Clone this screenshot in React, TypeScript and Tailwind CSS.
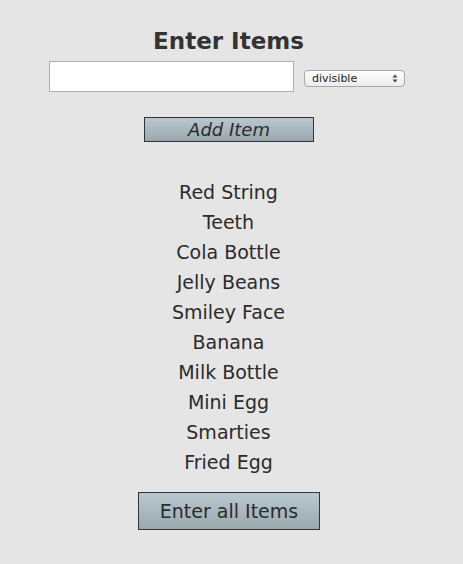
const items = [
  "Red String",
  "Teeth",
  "Cola Bottle",
  "Jelly Beans",
  "Smiley Face",
  "Banana",
  "Milk Bottle",
  "Mini Egg",
  "Smarties",
  "Fried Egg",
];

export default function App() {
  return (
    <div
      className="min-h-[564px] w-full bg-[#e5e5e5] text-[#2b2b2b]"
      style={{ fontFamily: '"DejaVu Sans", Verdana, sans-serif' }}
    >
      <div className="flex flex-col items-center pt-[26px]">
        <h1 className="mr-[6px] text-[23px] font-bold leading-[30px] text-[#333]">Enter Items</h1>
        <div className="mt-[5px] mr-[9px] flex items-center gap-[10px]">
          <input
            type="text"
            className="h-[31px] w-[245px] border border-[#a9b2b6] bg-white px-1 outline-none"
          />
          <div className="mt-[4px] flex h-[17px] w-[101px] items-center justify-between rounded-[4px] border border-[#a8a8a8] bg-gradient-to-b from-[#ffffff] to-[#ececec] pl-[7px] pr-[6px] text-[11px] leading-[15px] text-[#222]">
            <span>divisible</span>
            <svg width="6" height="9" viewBox="0 0 6 9">
              <path d="M0.5 3.5 L3 0.5 L5.5 3.5 Z" fill="#444" />
              <path d="M0.5 5.5 L3 8.5 L5.5 5.5 Z" fill="#444" />
            </svg>
          </div>
        </div>
        <button
          type="button"
          className="mt-[25px] mr-[5px] h-[25px] w-[170px] border border-[#333] bg-gradient-to-b from-[#b9c7d0] to-[#9aa8ae] text-[18px] italic leading-[22px] text-[#2b2b2b]"
        >
          Add Item
        </button>
        <ul className="mt-[35px] mr-[6px] flex flex-col items-center">
          {items.map((item) => (
            <li key={item} className="text-[19px] leading-[30px]">
              {item}
            </li>
          ))}
        </ul>
        <button
          type="button"
          className="mt-[15px] mr-[5px] h-[38px] w-[182px] border border-[#333] bg-gradient-to-b from-[#b9c7d0] to-[#9aa8ae] text-[19px] leading-[22px] text-[#2b2b2b]"
        >
          Enter all Items
        </button>
      </div>
    </div>
  );
}
